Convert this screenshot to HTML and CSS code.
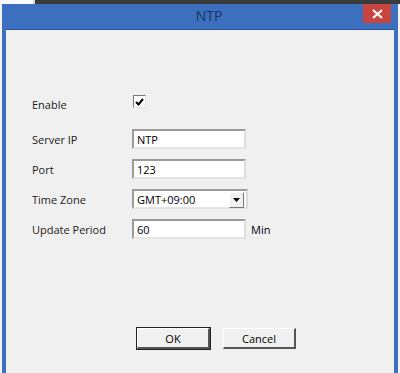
FILE: index.html
```html
<!DOCTYPE html>
<html lang="en">

<head>
    <meta charset="UTF-8">
    <title>NTP</title>
    <link rel="stylesheet" href="styles.css">
</head>

<body>
    <div class="desk">
        <div class="desk-left"></div>
        <div class="desk-dark"></div>
    </div>
    <div class="window">
        <div class="titlebar">
            <span class="title">NTP</span>
            <button class="close">
                <svg width="11" height="10" viewBox="0 0 11 10">
                    <path d="M1 1 L10 9 M10 1 L1 9" stroke="#fff" stroke-width="2.2" />
                </svg>
            </button>
        </div>
        <div class="content">
            <div class="form">
                <div class="row">
                    <label>Enable</label>
                    <span class="check">
                        <svg width="9" height="8" viewBox="0 0 9 8">
                            <path d="M1 4 L3.5 6.5 L8 1" stroke="#000" stroke-width="2" fill="none" />
                        </svg>
                    </span>
                </div>
                <div class="row">
                    <label>Server IP</label>
                    <span class="field">NTP</span>
                </div>
                <div class="row">
                    <label>Port</label>
                    <span class="field">123</span>
                </div>
                <div class="row">
                    <label>Time Zone</label>
                    <span class="field select">GMT+09:00
                        <span class="arrow">
                            <svg width="7" height="4" viewBox="0 0 7 4"><path d="M0 0 H7 L3.5 4 Z" fill="#000" /></svg>
                        </span>
                    </span>
                </div>
                <div class="row">
                    <label>Update Period</label>
                    <span class="field">60</span>
                    <span class="unit">Min</span>
                </div>
            </div>
            <div class="actions">
                <button class="btn ok">OK</button>
                <button class="btn">Cancel</button>
            </div>
        </div>
    </div>
</body>

</html>
```

FILE: styles.css
```css
body {
    margin: 0;
    width: 400px;
    height: 373px;
    overflow: hidden;
    background-color: #f3f3f3;
    font-family: "Open Sans", "Noto Sans", sans-serif;
    font-size: 11px;
    color: #1a1a1a;
}
.desk {
    display: flex;
    height: 4px;
}
.desk-left {
    width: 33px;
    background-color: #fafafa;
}
.desk-dark {
    flex: 1;
    background-color: #3a3a3a;
    border-left: 2px solid #d8d8d8;
}
.window {
    margin: 0 2px 0 2px;
    background-color: #3d6fbf;
    padding: 0 4px 0 4px;
    height: 369px;
    display: flex;
    flex-direction: column;
}
.titlebar {
    height: 25px;
    display: flex;
    align-items: center;
    justify-content: center;
    position: relative;
}
.title {
    font-size: 14px;
    color: #1b3560;
    margin-left: 18px;
    margin-top: -2px;
}
.close {
    position: absolute;
    right: 3px;
    top: 0;
    width: 28px;
    height: 19px;
    border: none;
    padding: 0;
    background-color: #c8443f;
    display: flex;
    align-items: center;
    justify-content: center;
}
.content {
    flex: 1;
    background-color: #f0f0f0;
    border-top: 1px solid #2a5296;
    display: flex;
    flex-direction: column;
}
.form {
    padding: 67px 0 0 26px;
}
.row {
    display: flex;
    align-items: center;
    height: 20px;
    margin-bottom: 10px;
}
.row:first-child {
    height: 14px;
    margin-bottom: 18px;
}
.row label {
    width: 100px;
}
.check {
    width: 11px;
    height: 11px;
    border: 1px solid #7a7a7a;
    border-right-color: #e0e0e0;
    border-bottom-color: #e0e0e0;
    background-color: #fff;
    display: flex;
    align-items: center;
    justify-content: center;
    margin-top: -5px;
    margin-left: 1px;
}
.field {
    box-sizing: border-box;
    width: 114px;
    height: 20px;
    background-color: #fff;
    border: 2px solid #9a9a9a;
    border-right-color: #dcdcdc;
    border-bottom-color: #e4e4e4;
    padding: 0 0 0 3px;
    display: flex;
    align-items: center;
    color: #000;
}
.select {
    width: 116px;
    position: relative;
}
.arrow {
    position: absolute;
    right: 2px;
    top: 1px;
    width: 13px;
    height: 14px;
    background-color: #f0f0f0;
    border: 1px solid #fff;
    border-right-color: #777;
    border-bottom-color: #777;
    display: flex;
    align-items: center;
    justify-content: center;
}
.unit {
    margin-left: 5px;
    color: #000;
}
.actions {
    margin-top: auto;
    margin-bottom: 24px;
    display: flex;
    justify-content: center;
    gap: 13px;
    padding-left: 33px;
}
.btn {
    width: 73px;
    height: 21px;
    font-family: "Open Sans", "Noto Sans", sans-serif;
    font-size: 11px;
    color: #000;
    background-color: #f0f0f0;
    border: 1px solid #fff;
    border-right: 2px solid #555;
    border-bottom: 2px solid #555;
}
.btn.ok {
    outline: 1px solid #222;
}
```
